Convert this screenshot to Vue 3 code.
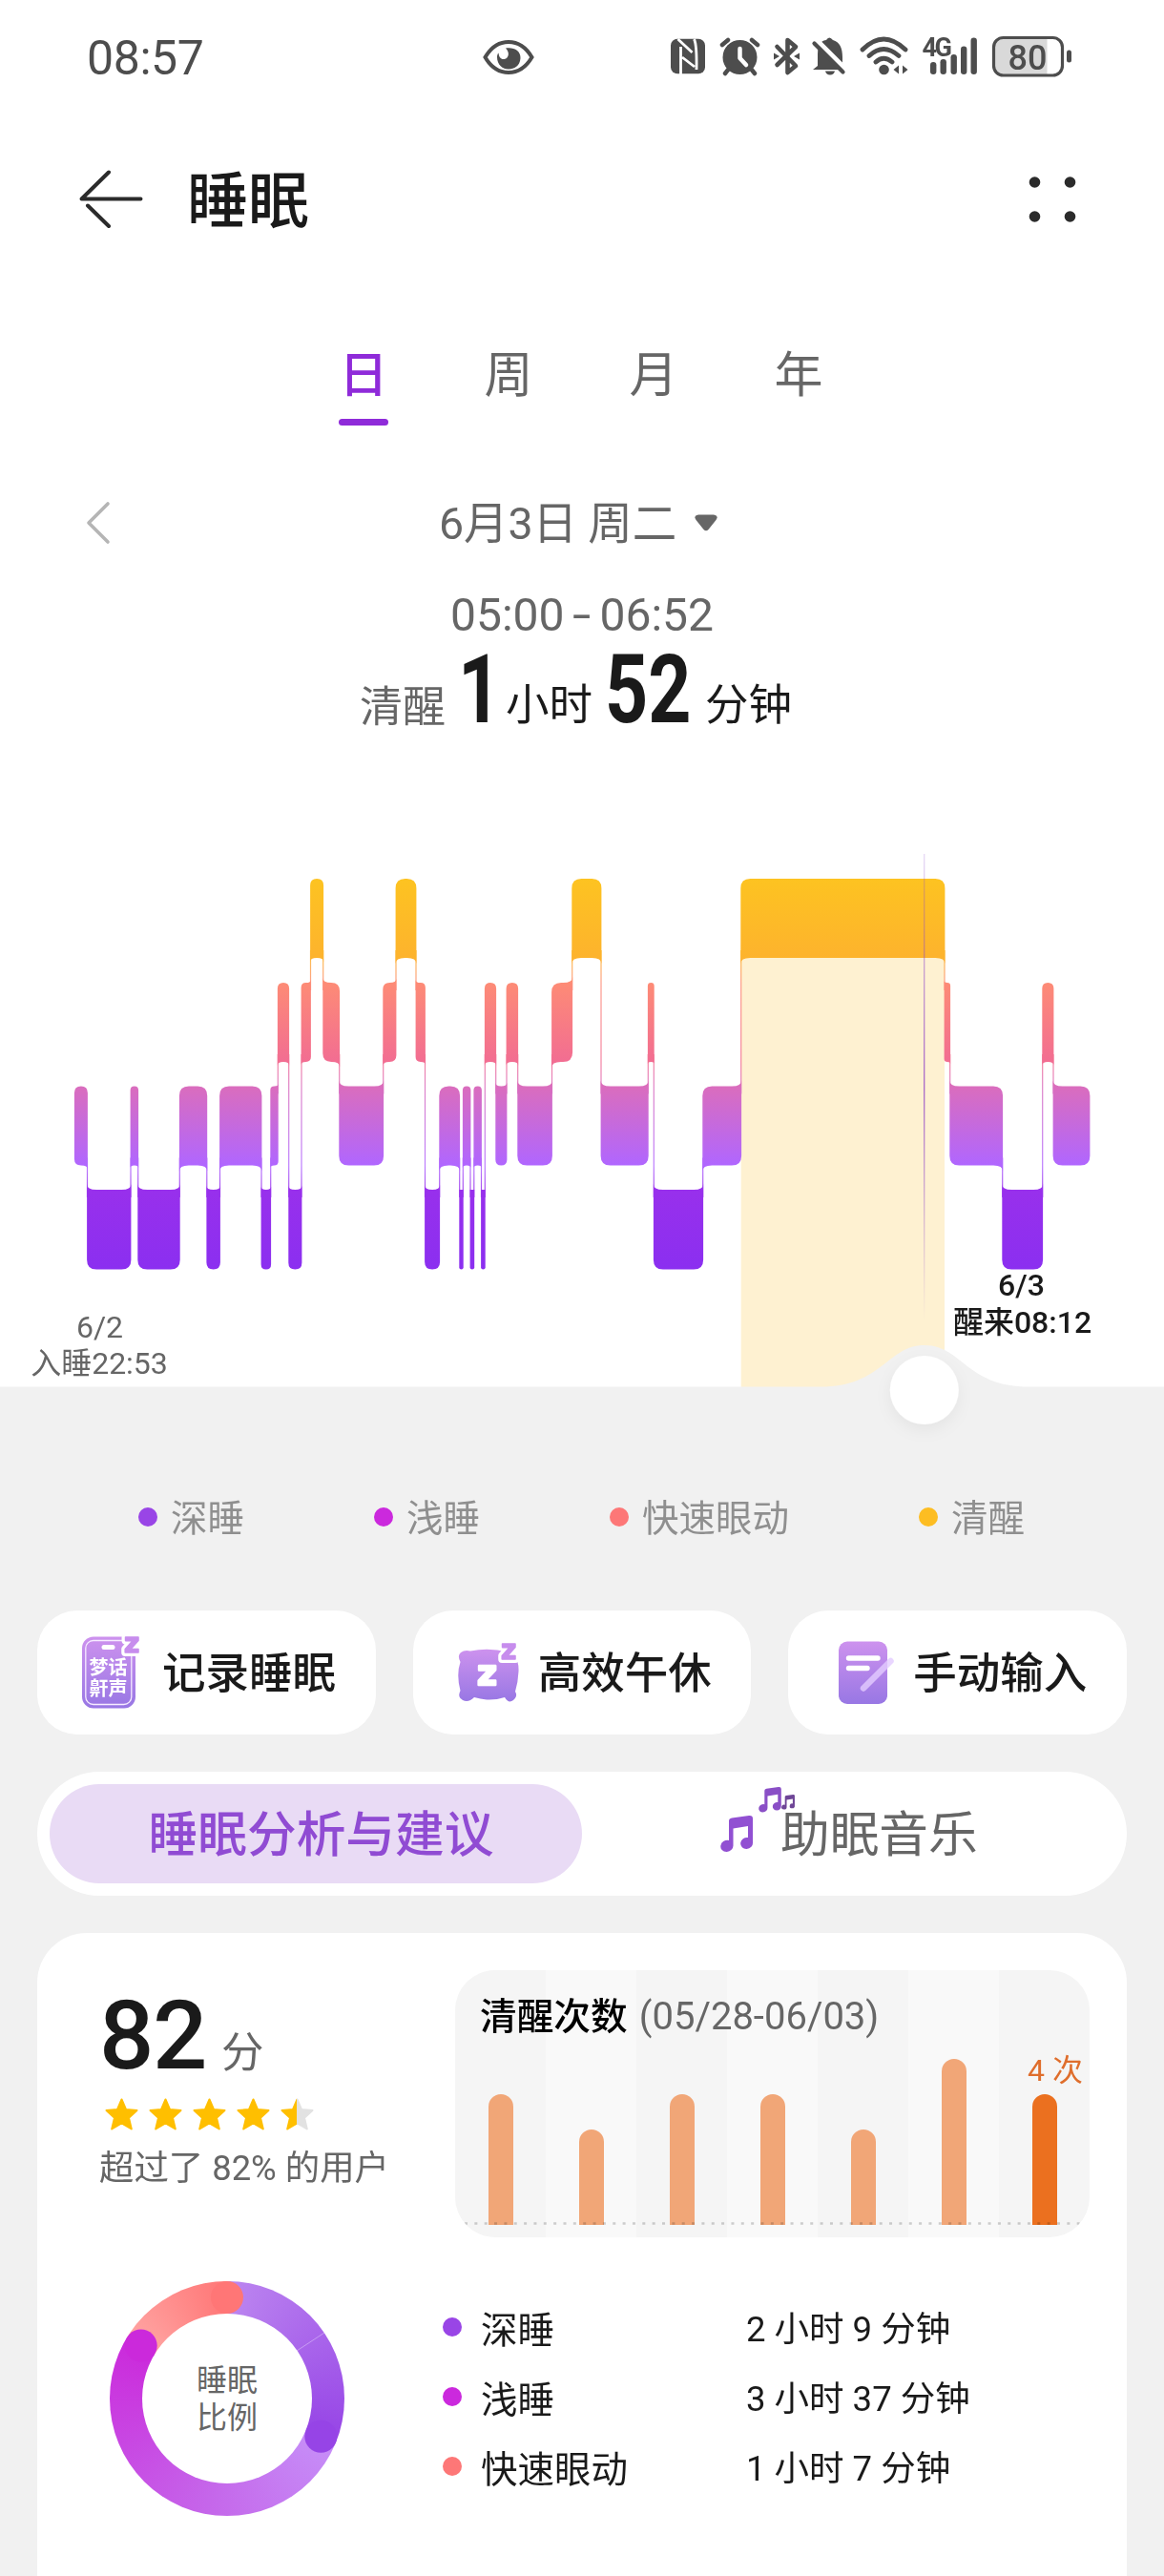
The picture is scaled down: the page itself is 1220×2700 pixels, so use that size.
<script setup>
const tabs = ['日', '周', '月', '年']

// Vertical extent of each sleep stage in the hypnogram
const levels = {
  awake: [921, 1004],
  rem: [1030, 1113],
  light: [1138.5, 1221.5],
  deep: [1247, 1330.5],
}

const stages = [
  ['light', 78.3], ['deep', 91.5], ['light', 137], ['deep', 144.7], ['light', 188.3],
  ['deep', 216.8], ['light', 230.5], ['deep', 274], ['light', 283.7], ['rem', 291.3],
  ['deep', 302.7], ['rem', 316], ['awake', 325.5], ['rem', 338.7], ['light', 355.7],
  ['rem', 401.7], ['awake', 415], ['rem', 436], ['deep', 445.5], ['light', 460.7],
  ['deep', 481.7], ['light', 485.3], ['deep', 493], ['light', 496.8], ['deep', 504.5],
  ['rem', 508.3], ['light', 519.7], ['rem', 531], ['light', 542.7], ['rem', 578.5],
  ['awake', 599.7], ['light', 630], ['rem', 679.3], ['deep', 685.3], ['light', 736.7],
  ['awake', 776.7], ['rem', 990], ['light', 995.7], ['deep', 1050.7], ['rem', 1092.7],
  ['light', 1104], [null, 1142],
]

const segments = stages.slice(0, -1).map(([level, start], i) => {
  const [top, bottom] = levels[level]
  const left = start - 0.4
  const right = stages[i + 1][1] + 0.4
  const r = Math.min(10, (right - left) / 2)
  const f = r > 3 ? r * 0.6 : 0
  const side = (neighbour) => {
    if (!neighbour || !neighbour[0]) return [top + r, bottom - r]
    return levels[neighbour[0]][0] < top ? [top - f, bottom - r] : [top + r, bottom + f]
  }
  const [lt, lb] = side(stages[i - 1])
  const [rt, rb] = side(stages[i + 1])
  return `M${left} ${lt}Q${left} ${top} ${left + r} ${top}H${right - r}Q${right} ${top} ${right} ${rt}` +
    `V${rb}Q${right} ${bottom} ${right - r} ${bottom}H${left + r}Q${left} ${bottom} ${left} ${lb}Z`
})

const connectors = stages.slice(1, -1).map(([level, x], i) => {
  const a = levels[stages[i][0]]
  const b = levels[level]
  const y = Math.min(a[1], b[1]) - 8
  return { x: x - 0.6, y, h: Math.max(a[0], b[0]) + 8 - y }
})

const legend = [
  { name: '深睡', color: '#9945e6' },
  { name: '浅睡', color: '#cb29dd' },
  { name: '快速眼动', color: '#fd7777' },
  { name: '清醒', color: '#fdbd22' },
]

const bars = [137, 100, 137, 137, 100, 174, 137]

const durations = [
  { name: '深睡', value: '2 小时 9 分钟', color: '#9945e6' },
  { name: '浅睡', value: '3 小时 37 分钟', color: '#cb29dd' },
  { name: '快速眼动', value: '1 小时 7 分钟', color: '#fd7777' },
]

const star = 'M17.5 1.5 L22 12 L33.5 13 L25 20.8 L27.8 32.5 L17.5 26.5 L7.2 32.5 L10 20.8 L1.5 13 L13 12 Z'
const note = 'M9 5.5Q9 3 12 2.5L30 0Q34 -.4 34 3V28A6.5 6 -20 1 1 29 23V11L13.500 13.500V31A6.700 6 -20 1 1 9 26Z'
</script>

<template>
  <div class="page">
    <div class="top">
      <div class="status">
        <span class="clock">08:57</span>
        <svg class="eye" width="54" height="38" viewBox="0 0 54 38">
          <path d="M2.500 19C9 8 17 3 27 3S45 8 51.500 19C45 30 37 35 27 35S9 30 2.500 19Z" fill="none" stroke="#4d4d4d" stroke-width="4" />
          <path d="M24 9.500C32 8 40 12 39.500 20S33 31.500 27 31.500S15 27 15 19C15 17 15.500 15.500 16.500 14.500C17 19 19 21.500 22.500 21C27.500 20 28.500 14 24 9.500Z" fill="#4d4d4d" />
        </svg>
        <svg class="indicators" width="430" height="50" viewBox="700 34 430 50" fill="#4d4d4d">
          <rect x="703" y="40.700" width="36" height="36.500" rx="7" />
          <path d="M710.500 41L725.500 55M713.500 49V78M715 60L728 70M727.500 41Q730.500 47 730 73" fill="none" stroke="#fff" stroke-width="2.800" />
          <circle cx="775.500" cy="60" r="18" />
          <path d="M757 47L763 42M788 42L794 47M764 72L760 77M787 72L791 77" stroke="#4d4d4d" stroke-width="4.500" stroke-linecap="round" />
          <path d="M775.500 51V61L782 68" fill="none" stroke="#fff" stroke-width="4.500" stroke-linecap="round" stroke-linejoin="round" />
          <path d="M814.500 49L834 69L825.500 76V42L834 49L814.500 68" fill="none" stroke="#4d4d4d" stroke-width="4.600" stroke-linecap="round" stroke-linejoin="round" />
          <path d="M811 55.500L817 59L811 62.500ZM838 55.500L832 59L838 62.500Z" />
          <path d="M857 69V57C857 46 862 42 866 42Q869 37 873 42C880 44 883 50 883 60V66L886 73H852Z" />
          <path d="M865 74.500H875Q874 78.500 870 78.500T865 74.500Z" />
          <path d="M857 43L888 74" stroke="#fff" stroke-width="5" />
          <path d="M853.500 45.500L883.500 75.500" stroke="#4d4d4d" stroke-width="4.200" stroke-linecap="round" />
          <g fill="none" stroke="#4d4d4d" stroke-width="4.800" stroke-linecap="round">
            <path d="M904 52Q926 30 949 52M911 58.500Q926 44.500 942 58.500M918 65Q926 57.500 935 65" />
          </g>
          <circle cx="926.500" cy="73" r="5.300" />
          <path d="M936.500 73L942 68.500V77.500ZM951.500 73L946 68.500V77.500Z" />
          <text x="966.500" y="58.500" class="net">4G</text>
          <rect x="975" y="65" width="6.400" height="13" rx="3.200" />
          <rect x="985.500" y="62" width="6.400" height="16" rx="3.200" />
          <rect x="996.500" y="57" width="6.400" height="21" rx="3.200" />
          <rect x="1007" y="48.500" width="6.400" height="29.500" rx="3.200" />
          <rect x="1017.500" y="39.500" width="6.400" height="38.500" rx="3.200" />
          <path d="M1097.500 40H1052Q1042 40 1042 50V68Q1042 78 1052 78H1097.500Z" fill="#d9d9d9" />
          <rect x="1041.500" y="39.500" width="72" height="39.500" rx="10" fill="none" stroke="#4d4d4d" stroke-width="3.200" />
          <rect x="1118" y="52.500" width="5" height="13" rx="2.500" />
          <text x="1056.500" y="72.500" class="level">80</text>
        </svg>
      </div>

      <header class="bar">
        <svg width="68" height="62" viewBox="0 0 68 62" fill="none" stroke="#2b2b2b" stroke-width="4" stroke-linecap="round" stroke-linejoin="round">
          <path d="M65.500 30.500H3.500L32 2.500M10 37.500L32 59" />
        </svg>
        <h1>睡眠</h1>
        <svg class="more" width="50" height="50" viewBox="0 0 50 50" fill="#2b2b2b">
          <circle cx="6.500" cy="7" r="5.800" /><circle cx="43.500" cy="7" r="5.800" />
          <circle cx="6.500" cy="43" r="5.800" /><circle cx="43.500" cy="43" r="5.800" />
        </svg>
      </header>

      <nav class="tabs">
        <span v-for="(t, i) in tabs" :key="t" class="tab" :class="{ active: i === 0 }">{{ t }}</span>
      </nav>

      <div class="date">
        <svg width="26" height="46" viewBox="0 0 26 46" fill="none" stroke="#b5b5b5" stroke-width="3.600" stroke-linecap="round" stroke-linejoin="round">
          <path d="M23 3L3 23L23 43" />
        </svg>
        <span class="day">6月3日 周二</span>
        <svg width="24" height="18" viewBox="0 0 24 18"><path d="M4 .5H20Q25.500 1.500 22.500 6L14.500 16Q12 18.500 9.500 16L1.500 6Q-1.500 1.500 4 .5Z" fill="#666" /></svg>
      </div>

      <div class="range">05:00 <span class="dash">-</span> 06:52</div>
      <div class="total">
        <span class="kind">清醒</span>
        <span class="num one">1</span>
        <span class="unit">小时</span>
        <span class="num two">52</span>
        <span class="unit">分钟</span>
      </div>
    </div>

    <svg class="chart" width="1220" height="660" viewBox="0 860 1220 660">
      <defs>
        <linearGradient id="stage" gradientUnits="userSpaceOnUse" x1="0" y1="921" x2="0" y2="1330">
          <stop offset="0" stop-color="#fdc321" />
          <stop offset=".203" stop-color="#fdb32d" />
          <stop offset=".267" stop-color="#fd8b76" />
          <stop offset=".47" stop-color="#f26d92" />
          <stop offset=".532" stop-color="#da6dbd" />
          <stop offset=".735" stop-color="#b066ff" />
          <stop offset=".797" stop-color="#9830ec" />
          <stop offset="1" stop-color="#8b2ff0" />
        </linearGradient>
        <linearGradient id="cursor" x1="0" y1="0" x2="0" y2="1">
          <stop offset="0" stop-color="#8b4bd0" stop-opacity=".25" />
          <stop offset=".5" stop-color="#8b3bc4" stop-opacity=".9" />
          <stop offset="1" stop-color="#8b4bd0" stop-opacity="0" />
        </linearGradient>
        <filter id="soft" x="-50%" y="-50%" width="200%" height="200%">
          <feDropShadow dx="0" dy="6" stdDeviation="8" flood-color="#000" flood-opacity=".05" />
        </filter>
      </defs>
      <rect x="0" y="860" width="1220" height="594" fill="#fff" />
      <rect x="776.700" y="990" width="213.300" height="464" fill="#fef1d1" />
      <rect v-for="(c, i) in connectors" :key="'c' + i" :x="c.x" :y="c.y" width="1.200" :height="c.h" fill="url(#stage)" opacity=".85" />
      <path v-for="(d, i) in segments" :key="'s' + i" :d="d" fill="url(#stage)" />
      <rect x="968.200" y="895" width="1.100" height="490" fill="url(#cursor)" />
      <path d="M0 1453.500H860C925 1453.500 930 1410 969 1410S1013 1453.500 1078 1453.500H1220V1520H0Z" fill="#f1f1f1" />
      <circle cx="968.800" cy="1457" r="36" fill="#fff" filter="url(#soft)" />
      <g class="axis" text-anchor="middle">
        <text x="104.500" y="1401.500" fill="#666">6/2</text>
        <text x="104" y="1439.500" fill="#666">入睡22:53</text>
        <text x="1070.500" y="1358" fill="#1a1a1a" class="wake">6/3</text>
        <text x="1071.500" y="1397" fill="#1a1a1a" class="wake">醒来08:12</text>
      </g>
    </svg>

    <div class="legend">
      <div v-for="l in legend" :key="l.name" class="legend-item">
        <i class="dot" :style="{ background: l.color }"></i>{{ l.name }}
      </div>
    </div>

    <div class="actions">
      <svg width="0" height="0" class="defs">
        <linearGradient id="lilac" x1="0" y1="0" x2="0" y2="1">
          <stop offset="0" stop-color="#cd92ee" /><stop offset="1" stop-color="#9877e4" />
        </linearGradient>
      </svg>
      <div class="action">
        <svg width="70" height="96" viewBox="0 -8 70 96">
          <rect x="2" y="2.500" width="56" height="75" rx="12" fill="url(#lilac)" />
          <rect x="5.800" y="6.500" width="48" height="67" rx="8" fill="none" stroke="#f6ecff" stroke-width="1.300" />
          <rect x="22.500" y="11" width="14" height="5" rx="2.500" fill="#fff" />
          <text x="9.500" y="42" class="tiny">梦话</text>
          <text x="9.500" y="63.500" class="tiny">鼾声</text>
          <text x="46" y="19" class="zed-cut">z</text>
          <text x="46" y="19" class="zed">z</text>
        </svg>
        <span>记录睡眠</span>
      </div>
      <div class="action">
        <svg width="70" height="96" viewBox="0 -8 70 96">
          <path d="M15 17.500Q35 13.500 54 18.500L61 23Q66 28 65.500 39T62 60Q65 65 60 69T51 66Q35 71 19 66Q13 72 7 69T4.500 59Q0 42 4.500 29Q1 22 5 19T15 17.500Z" fill="url(#lilac)" />
          <text x="22" y="53" class="zed-big">z</text>
          <text x="47" y="25.500" class="zed-cut">z</text>
          <text x="47" y="25.500" class="zed">z</text>
        </svg>
        <span>高效午休</span>
      </div>
      <div class="action">
        <svg width="70" height="96" viewBox="0 -8 70 96">
          <rect x="8" y="7.500" width="51" height="65.500" rx="9" fill="url(#lilac)" />
          <path d="M18.500 25H49M18.500 35.500H38" stroke="#fff" stroke-width="5.400" stroke-linecap="round" />
          <path d="M34 56.500L62.500 28" stroke="#e4ccff" stroke-opacity=".8" stroke-width="6.500" stroke-linecap="round" />
        </svg>
        <span>手动输入</span>
      </div>
    </div>

    <div class="switch">
      <div class="side on"><span>睡眠分析与建议</span></div>
      <div class="side music">
        <svg width="80" height="70" viewBox="0 0 80 70" fill="#9150d2">
          <path :d="note" transform="translate(0 31)" />
          <path :d="note" transform="translate(40 1) scale(.7)" fill="#8a4fc6" />
          <path :d="note" transform="translate(64 9) scale(.41)" fill="#6e4596" />
        </svg>
        <span>助眠音乐</span>
      </div>
    </div>

    <section class="card">
      <div class="overview">
        <div class="score">
          <div class="points"><b>82</b><span>分</span></div>
          <div class="stars">
            <svg v-for="n in 5" :key="n" width="35" height="35" viewBox="0 0 35 35">
              <defs v-if="n === 5">
                <linearGradient id="half"><stop offset=".5" stop-color="#ffbf00" /><stop offset=".5" stop-color="#e2e2e2" /></linearGradient>
              </defs>
              <path :d="star" :fill="n === 5 ? 'url(#half)' : '#ffbf00'" :stroke="n === 5 ? 'url(#half)' : '#ffbf00'" stroke-width="2" stroke-linejoin="round" />
            </svg>
          </div>
          <div class="rank">超过了 82% 的用户</div>
        </div>
        <div class="panel">
          <div class="columns">
            <div v-for="(h, i) in bars" :key="i" class="column">
              <span v-if="i === 6" class="count">4 次</span>
              <div class="fill" :class="{ today: i === 6 }" :style="{ height: h + 'px' }"></div>
            </div>
          </div>
          <div class="caption"><b>清醒次数</b><span>(05/28-06/03)</span></div>
          <svg class="baseline" width="650" height="3" viewBox="0 0 650 3"><path d="M0 1.500H650" stroke="#d2d2d2" stroke-width="2.400" stroke-dasharray="3 7.350" /></svg>
        </div>
      </div>

      <div class="ratio">
        <div class="donut">
          <div class="hole">睡眠<br />比例</div>
          <svg class="caps" width="246" height="246" viewBox="-123 -123 246 246">
            <path d="M73 -50L102 -69" stroke="#fff" stroke-opacity=".35" stroke-width="1" />
            <circle cx="98.300" cy="39.700" r="17" fill="#9644e6" />
            <circle cx="-90.300" cy="-55.500" r="17" fill="#cb29db" />
            <circle cx="0" cy="-106" r="17" fill="#ff7676" />
          </svg>
        </div>
        <div class="rows">
          <div v-for="d in durations" :key="d.name" class="row">
            <i class="dot" :style="{ background: d.color }"></i>
            <span class="name">{{ d.name }}</span>
            <span class="value">{{ d.value }}</span>
          </div>
        </div>
      </div>
    </section>
  </div>
</template>

<style>
body { margin: 0; background: #f1f1f1; }
</style>

<style scoped>
.page {
  width: 1220px;
  height: 2700px;
  overflow: hidden;
  display: flex;
  flex-direction: column;
  background: #f1f1f1;
  color: #1a1a1a;
  font-family: Roboto, "Noto Sans CJK SC", sans-serif;
}
svg { display: block; flex: none; }
.top { background: #fff; height: 860px; flex: none; }

.status { height: 120px; display: flex; align-items: center; padding: 0 90px 0 91px; }
.clock { font-size: 50px; letter-spacing: -.4px; line-height: 60px; color: #4d4d4d; width: 415px; padding-top: 2px; }
.indicators { margin-left: auto; margin-top: -2px; }
.net { font-size: 27px; font-weight: 700; letter-spacing: -2.5px; }
.level { font-size: 36px; font-weight: 500; }

.bar { height: 180px; display: flex; align-items: center; padding: 0 92px 0 82px; }
.bar h1 { margin: 0 auto 0 46px; padding-top: 3px; font-size: 64px; line-height: 80px; font-weight: 500; }
.bar svg { margin-top: -2px; }

.tabs { height: 160px; display: flex; justify-content: center; padding-right: 2px; }
.tab {
  width: 52px; margin: 0 50px; padding-top: 59px; box-sizing: border-box;
  font-size: 51px; line-height: 70px; color: #666; text-align: center; height: 146px;
}
.tab.active { color: #8f2bd9; font-weight: 500; }
.tab.active::after { content: ""; display: block; margin-top: 10px; height: 7px; border-radius: 3.5px; background: #8f2bd9; }

.date { height: 176px; display: flex; align-items: center; padding-left: 90px; box-sizing: border-box; }
.day { margin-left: 344px; margin-right: 19px; width: 249px; white-space: nowrap; font-size: 46.500px; line-height: 60px; color: #666; padding-top: 1px; letter-spacing: -.1px; }

.range { height: 54px; margin-top: -18px; font-size: 48px; line-height: 54px; color: #666; text-align: center; }
.dash { display: inline-block; transform: scaleX(1.45); }
.total { display: flex; align-items: baseline; height: 120px; padding-left: 377px; line-height: 100px; margin-top: 1px; }
.kind { font-size: 45px; color: #666; width: 103px; }
.unit { font-size: 45.500px; transform: translateY(-2px); }
.num { font-size: 101px; font-weight: 700; transform: scaleX(.78); transform-origin: 0 50%; white-space: nowrap; }
.one { width: 50px; }
.two { width: 105px; margin-left: 13px; }

.axis { font-size: 32px; }
.wake { font-weight: 500; }

.legend { display: flex; gap: 136px; padding-left: 145px; margin-top: 42px; height: 60px; }
.legend-item { display: flex; align-items: center; font-size: 38.500px; line-height: 56px; color: #8f8f8f; white-space: nowrap; }
.dot { width: 20px; height: 20px; border-radius: 50%; margin-right: 14px; flex: none; }
.legend .dot { margin-top: -4px; }

.actions { display: flex; gap: 39px; padding: 0 39px; margin-top: 66px; position: relative; }
.defs { position: absolute; }
.action {
  flex: 1; height: 130px; box-sizing: border-box; padding-left: 45px;
  border-radius: 42px; background: #fff; display: flex; align-items: center; gap: 15px;
  font-size: 45.500px; line-height: 64px; font-weight: 500; white-space: nowrap;
}
.action span { padding: 4px 0 0 1px; }
.tiny { font-size: 20px; font-weight: 700; fill: #fff; }
.zed, .zed-cut, .zed-big { font-family: "DejaVu Sans", sans-serif; font-weight: 700; }
.zed { font-size: 28px; fill: #c78ded; stroke: #c78ded; stroke-width: 1.6; stroke-linejoin: round; }
.zed-cut { font-size: 28px; fill: #fff; stroke: #fff; stroke-width: 8; stroke-linejoin: round; }
.zed-big { font-size: 36px; fill: #fff; stroke: #fff; stroke-width: 2.4; stroke-linejoin: round; }

.switch { margin: 39px 39px 0; padding: 13px; height: 104px; border-radius: 65px; background: #fff; display: flex; }
.side { width: 558px; display: flex; align-items: center; justify-content: center; font-size: 51.700px; line-height: 70px; white-space: nowrap; }
.side span { padding-top: 4px; }
.side.on { border-radius: 52px; background: #e9dbf5; color: #904bd3; font-weight: 500; padding-left: 11px; box-sizing: border-box; }
.side.music { color: #666; justify-content: flex-start; padding-left: 145px; box-sizing: border-box; }
.music svg { margin: -31px -17px 0 0; }

.card { margin: 39px 39px 0; border-radius: 52px 52px 0 0; background: #fff; flex: 1; padding: 39px 39px 0 65px; }
.overview { display: flex; height: 280px; }
.score { width: 373px; }
.points { display: flex; align-items: baseline; height: 134px; line-height: 138px; }
.points b { font-size: 101px; font-weight: 500; width: 128px; letter-spacing: -1.5px; }
.points span { font-size: 44.500px; color: #666; transform: translateY(-1px); }
.stars { display: flex; gap: 11px; padding-left: 5.500px; }
.rank { font-size: 36.400px; line-height: 50px; color: #666; margin-top: 14px; white-space: nowrap; }

.panel { position: relative; width: 665px; height: 280px; border-radius: 42px; overflow: hidden; background: #f5f5f5; }
.columns { display: flex; height: 100%; }
.column { width: 95px; display: flex; flex-direction: column; justify-content: flex-end; align-items: center; padding-bottom: 13px; box-sizing: border-box; }
.column:nth-child(even) { background: #f9f9f9; }
.fill { width: 26px; border-radius: 13px 13px 0 0; background: #f1a677; }
.fill.today { background: #eb701f; }
.count { font-size: 32px; line-height: 40px; color: #df6e2c; margin: 0 -3px 5px 20px; white-space: nowrap; }
.caption { position: absolute; left: 26px; top: 24px; display: flex; align-items: baseline; gap: 12px; line-height: 50px; font-size: 38.700px; color: #000; }
.caption b { font-weight: 500; }
.caption span { font-size: 40px; color: #666; }
.baseline { position: absolute; left: 10px; bottom: 13px; mix-blend-mode: multiply; }

.ratio { display: flex; margin-top: 46px; padding-left: 11px; }
.donut {
  position: relative; width: 246px; height: 246px; border-radius: 50%; display: flex; align-items: center; justify-content: center;
  background: conic-gradient(#bc86f0 0deg, #9644e6 112deg, #c68ff8 112deg, #c566ea 190deg, #cb29db 301.600deg, #ffa5a3 301.600deg, #ff7676 360deg);
}
.hole { width: 178px; height: 178px; border-radius: 50%; background: #fff; box-sizing: border-box; padding-top: 51px; text-align: center; font-size: 32px; line-height: 39px; color: #666; }
.caps { position: absolute; left: 0; top: 0; }
.rows { margin: 11px 0 0 103px; }
.row { display: flex; align-items: center; height: 73px; white-space: nowrap; }
.row .dot { margin-right: 20px; }
.name { font-size: 38.500px; width: 278px; }
.value { font-size: 36.500px; }
</style>
